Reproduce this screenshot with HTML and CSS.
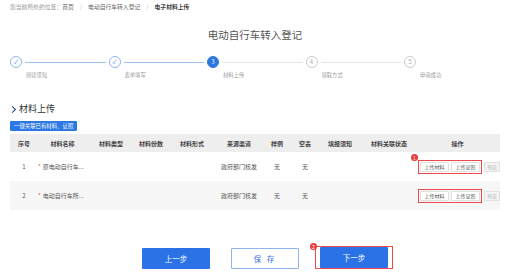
FILE: index.html
```html
<!DOCTYPE html>
<html lang="zh-CN">
<head>
    <meta charset="UTF-8">
    <title>电子材料上传</title>
    <link rel="stylesheet" href="styles.css">
</head>
<body>
    <div class="page">
        <div class="crumb">
            您当前所处的位置：<a href="#">首页</a><span class="sep">/</span><a href="#">电动自行车转入登记</a><span class="sep">/</span><b>电子材料上传</b>
        </div>

        <h1 class="title">电动自行车转入登记</h1>

        <div class="steps">
            <div class="step done">
                <div class="head"><span class="dot">&#10003;</span><span class="line"></span></div>
                <div class="label">阅读须知</div>
            </div>
            <div class="step done">
                <div class="head"><span class="dot">&#10003;</span><span class="line"></span></div>
                <div class="label">表单填写</div>
            </div>
            <div class="step active">
                <div class="head"><span class="dot">3</span><span class="line"></span></div>
                <div class="label">材料上传</div>
            </div>
            <div class="step">
                <div class="head"><span class="dot">4</span><span class="line"></span></div>
                <div class="label">领取方式</div>
            </div>
            <div class="step last">
                <div class="head"><span class="dot">5</span></div>
                <div class="label">申请成功</div>
            </div>
        </div>

        <h2 class="section"><span class="chev"></span>材料上传</h2>

        <button class="link-btn">一键关联已有材料、证照</button>

        <table class="grid">
            <colgroup>
                <col style="width:28px"><col style="width:49px"><col style="width:48px"><col style="width:32px">
                <col style="width:50px"><col style="width:44px"><col style="width:32px"><col style="width:24px">
                <col style="width:46px"><col style="width:52px"><col style="width:85px">
            </colgroup>
            <thead>
                <tr>
                    <th>序号</th><th>材料名称</th><th>材料类型</th><th>材料份数</th><th>材料形式</th>
                    <th>来源渠道</th><th>样例</th><th>空表</th><th>填报须知</th><th>材料关联状态</th><th>操作</th>
                </tr>
            </thead>
            <tbody>
                <tr>
                    <td>1</td>
                    <td class="name"><span class="req">*</span>原电动自行车...</td>
                    <td></td><td></td><td></td>
                    <td>政府部门核发</td><td>无</td><td>无</td><td></td><td></td>
                    <td class="ops">
                        <span class="mark"><i class="badge">1</i><button class="op">上传材料</button><button class="op">上传证照</button></span><button class="op off">预览</button>
                    </td>
                </tr>
                <tr class="alt">
                    <td>2</td>
                    <td class="name"><span class="req">*</span>电动自行车所...</td>
                    <td></td><td></td><td></td>
                    <td>政府部门核发</td><td>无</td><td>无</td><td></td><td></td>
                    <td class="ops">
                        <span class="mark"><button class="op">上传材料</button><button class="op">上传证照</button></span><button class="op off">预览</button>
                    </td>
                </tr>
            </tbody>
        </table>

        <div class="actions">
            <button class="btn primary">上一步</button>
            <button class="btn plain">保 存</button>
            <span class="mark big"><i class="badge">2</i><button class="btn primary">下一步</button></span>
        </div>
    </div>
</body>
</html>
```

FILE: styles.css
```css
body {
    margin: 0;
    background-color: #ffffff;
    font-family: "Noto Sans CJK SC", "Noto Sans", sans-serif;
    color: #555555;
}
.page {
    padding: 0 9px 0 10px;
}
.crumb {
    height: 14px;
    line-height: 14px;
    font-size: 5.8px;
    color: #999999;
}
.crumb a {
    color: #666666;
    text-decoration: none;
}
.crumb .sep {
    margin: 0 6px;
    color: #bbbbbb;
}
.crumb b {
    color: #444444;
}
.title {
    margin: 14px 0 0;
    line-height: 14px;
    font-size: 10.5px;
    font-weight: normal;
    color: #555555;
    text-align: center;
}

/* steps */
.steps {
    display: flex;
    margin-top: 14px;
}
.step {
    width: 98.5px;
}
.step.last {
    width: 40px;
}
.step .head {
    display: flex;
    align-items: center;
}
.step .dot {
    box-sizing: border-box;
    width: 12px;
    height: 12px;
    border-radius: 50%;
    border: 1px solid #cccccc;
    color: #aaaaaa;
    font-size: 6px;
    line-height: 10px;
    text-align: center;
    flex: none;
}
.step .line {
    flex: 1;
    height: 1px;
    margin: 0 3px;
    background-color: #e6e6e6;
}
.step.done .dot {
    border-color: #8cb6f2;
    color: #4a86e8;
}
.step.done .line {
    background-color: #9fc3f6;
}
.step.active .dot {
    border-color: #2b78e4;
    background-color: #2b78e4;
    color: #ffffff;
}
.step .label {
    margin: 3px 0 0 16px;
    line-height: 8px;
    font-size: 5.3px;
    color: #999999;
}

/* section */
.section {
    display: flex;
    align-items: center;
    margin: 23px 0 0;
    line-height: 14px;
    font-size: 9px;
    font-weight: normal;
    color: #333333;
}
.chev {
    width: 4px;
    height: 4px;
    margin: 0 4px 0 0;
    border-top: 1.5px solid #1f3f7a;
    border-right: 1.5px solid #1f3f7a;
    transform: rotate(45deg);
}
.link-btn {
    display: block;
    margin-top: 5px;
    height: 10px;
    padding: 0 4px;
    border: none;
    border-radius: 1px;
    background-color: #2b78e4;
    color: #ffffff;
    font-family: inherit;
    font-size: 5.4px;
    line-height: 10px;
}

/* table */
.grid {
    width: 490px;
    margin-top: 3px;
    table-layout: fixed;
    border-collapse: collapse;
    font-size: 6px;
}
.grid th {
    height: 18px;
    padding: 0;
    background-color: #eeeeee;
    color: #444444;
    font-weight: bold;
    text-align: center;
}
.grid td {
    height: 29px;
    padding: 0;
    text-align: center;
    white-space: nowrap;
}
.grid tr.alt td {
    background-color: #f7f7f7;
}
.grid td.name {
    text-align: left;
}
.req {
    color: #f05a5a;
    margin-right: 2px;
}
.grid td.ops {
    text-align: left;
    padding-left: 3px;
}
.mark {
    position: relative;
    display: inline-flex;
    gap: 2px;
    padding: 1px;
    border: 1.5px solid #ec4a4a;
    vertical-align: middle;
}
.badge {
    position: absolute;
    left: -8px;
    top: -7px;
    width: 7px;
    height: 7px;
    border-radius: 50%;
    background-color: #ec3b3b;
    color: #ffffff;
    font-size: 5px;
    font-style: normal;
    line-height: 7px;
    text-align: center;
}
.op {
    height: 10px;
    width: 29px;
    padding: 0;
    border: 1px solid #e0e0e0;
    border-radius: 1px;
    background-color: #ffffff;
    color: #555555;
    font-family: inherit;
    font-size: 5px;
    line-height: 8px;
    vertical-align: middle;
}
.op.off {
    width: 16px;
    margin-left: 2px;
    background-color: #f5f5f5;
    color: #bbbbbb;
}

/* bottom buttons */
.actions {
    display: flex;
    justify-content: center;
    align-items: flex-end;
    gap: 21px;
    margin-top: 36px;
    padding-left: 25px;
}
.btn {
    width: 68px;
    height: 21px;
    padding: 0;
    border-radius: 1px;
    font-family: inherit;
    font-size: 7.5px;
    cursor: pointer;
}
.btn.primary {
    border: none;
    background-color: #2b72e6;
    color: #ffffff;
}
.btn.plain {
    border: 1px solid #8fb3f0;
    background-color: #ffffff;
    color: #3a6fd8;
    letter-spacing: 2px;
}
.mark.big {
    padding: 0 4px;
    margin-left: -5px;
}
.mark.big .badge {
    left: -6px;
    top: -4px;
}
```
